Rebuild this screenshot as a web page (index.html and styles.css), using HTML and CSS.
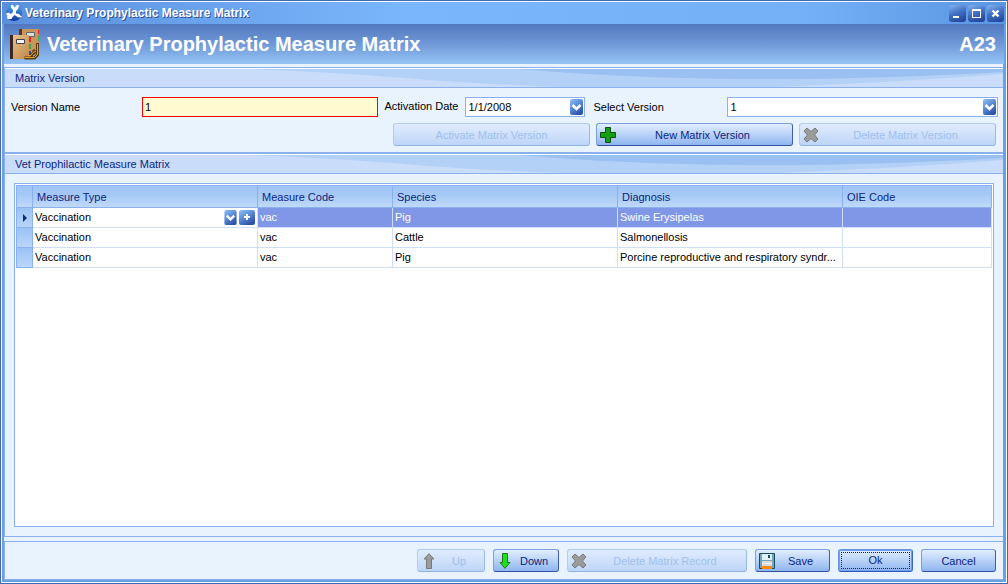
FILE: index.html
```html
<!DOCTYPE html>
<html lang="en">
<head>
<meta charset="utf-8">
<title>Veterinary Prophylactic Measure Matrix</title>
<link rel="stylesheet" href="styles.css">
</head>
<body>
<svg class="defs" aria-hidden="true">
  <defs>
    <linearGradient id="knob" x1="0" y1="0" x2="0.6" y2="1">
      <stop offset="0" stop-color="#8fc0f8"/><stop offset="0.45" stop-color="#5f93dc"/><stop offset="1" stop-color="#2d52a6"/>
    </linearGradient>
    <symbol id="chevron" viewBox="0 0 13 16">
      <rect width="13" height="16" rx="2" fill="url(#knob)"/>
      <path d="M2.500 6l4 4 4-4" fill="none" stroke="#fff" stroke-width="2.600"/>
    </symbol>
    <symbol id="cross" viewBox="0 0 16 16">
      <path d="M4 1l4 3.500L12 1l3 3-3.500 4 3.500 4-3 3-4-3.500L4 15l-3-3 3.500-4L1 4z" fill="#9b9b9b" stroke="#777" stroke-linejoin="round"/>
    </symbol>
    <symbol id="sweep" viewBox="0 0 1000 18" preserveAspectRatio="none">
      <rect width="1000" height="18" fill="#b3d0f7"/>
      <path d="M0 0H245Q330 3 400 9T560 18H0z" fill="#c9dcfa"/>
      <path d="M515 0Q620 9 740 10T1000 3V0z" fill="#9abff1"/>
      <path d="M770 18Q880 14 1000 5V18z" fill="#c9dcfa"/>
    </symbol>
  </defs>
</svg>
<div class="window">
  <header class="titlebar">
    <svg class="app-icon" viewBox="0 0 16 16" aria-hidden="true">
      <defs><linearGradient id="orb" x1="0" y1="0" x2="0" y2="1"><stop offset="0" stop-color="#4da3ea"/><stop offset="1" stop-color="#12379a"/></linearGradient></defs>
      <circle cx="8" cy="8" r="8" fill="url(#orb)"/>
      <path d="M5 0h2l1.500 2.500L11 0h2l-1 4-2 2v2.500l3 .5 3 3-3.500.5L8.500 10l-2 2-1 2H1.500L1 11l3-2 2.500-1L7 5 5 2.500z" fill="#fff"/>
      <path d="M0 8.500l3-1 1.500 1.500L1 11z" fill="#fff"/>
    </svg>
    <span class="caption">Veterinary Prophylactic Measure Matrix</span>
    <button class="sys" aria-label="Minimize"><svg viewBox="0 0 17 17"><path d="M4 11h6v2H4z" fill="#fff"/></svg></button>
    <button class="sys" aria-label="Maximize"><svg viewBox="0 0 17 17"><path d="M4 4h9v9H4zM5 6v6h7V6z" fill="#fff" fill-rule="evenodd"/></svg></button>
    <button class="sys" aria-label="Close"><svg viewBox="0 0 17 17"><path d="M5.500 5.500l6 6m0-6l-6 6" stroke="#fff" stroke-width="2.400"/></svg></button>
  </header>
  <div class="banner">
    <svg class="banner-icon" viewBox="0 0 32 32" aria-hidden="true">
      <defs><linearGradient id="tan" x1="0" y1="0" x2="1" y2="1"><stop offset="0" stop-color="#eac795"/><stop offset="1" stop-color="#bf8748"/></linearGradient></defs>
      <path d="M11 1h20v26H11z" fill="#c4965c"/><path d="M11 1h3v6h-3z" fill="#5e371c"/>
      <path d="M30 2h1v4h-1zM21 9h2v5h-2z" fill="#e22b26"/><path d="M30 8h1v5h-1zM21 16h2v5h-2z" fill="#38a94c"/><path d="M21 23h2v4h-2z" fill="#31509b"/>
      <path d="M18.500 4.500h8v4h-8z" fill="#ddd" stroke="#666"/>
      <path d="M2 7h19v24H2z" fill="url(#tan)"/><path d="M2 7h3v24H2z" fill="#3f2620"/>
      <path d="M8.500 11.500h8v4h-8z" fill="#eef4fa" stroke="#444"/>
      <path d="M29.500 15v12l-3 3h-10M25 22l2 2-4 3 1 2" fill="none" stroke="#5e3a0c" stroke-width="3"/>
      <path d="M29.500 16v10.500l-3 3H17M28 23l-3 1.500-2 3h-3" fill="none" stroke="#e0a62c"/>
    </svg>
    <h1>Veterinary Prophylactic Measure Matrix</h1>
    <span class="code">A23</span>
  </div>
  <form class="content">
    <section class="panel">
      <h2 class="panel-head"><svg class="sweep" aria-hidden="true"><use href="#sweep"/></svg><span>Matrix Version</span></h2>
      <div class="panel-body">
        <div class="fields">
          <label for="name">Version Name</label>
          <input id="name" class="box required" type="text" value="1">
          <label class="raised" for="date">Activation Date</label>
          <span class="combo">
            <input id="date" class="box" type="text" value="1/1/2008">
            <button type="button" class="drop" aria-label="Open calendar"><svg class="knob"><use href="#chevron"/></svg></button>
          </span>
          <label class="inset" for="version">Select Version</label>
          <span class="combo">
            <select id="version" class="box"><option>1</option></select>
            <svg class="knob" aria-hidden="true"><use href="#chevron"/></svg>
          </span>
        </div>
        <div class="actions">
          <button type="button" class="btn wide" disabled><span>Activate Matrix Version</span></button>
          <button type="button" class="btn wide">
            <svg class="icon" viewBox="0 0 16 16"><path d="M5.500.5h5v5h5v5h-5v5h-5v-5h-5v-5h5z" fill="#12a012" stroke="#104c10"/></svg>
            <span>New Matrix Version</span></button>
          <button type="button" class="btn wide" disabled>
            <svg class="icon"><use href="#cross"/></svg>
            <span>Delete Matrix Version</span></button>
        </div>
      </div>
    </section>
    <section class="panel grow">
      <h2 class="panel-head"><svg class="sweep" aria-hidden="true"><use href="#sweep"/></svg><span>Vet Prophilactic Measure Matrix</span></h2>
      <div class="grid-area">
        <div class="grid">
          <table>
            <colgroup><col class="c-mark"><col class="c-wide"><col class="c-code"><col class="c-wide"><col class="c-wide"><col></colgroup>
            <thead>
              <tr><th></th><th scope="col">Measure Type</th><th scope="col">Measure Code</th><th scope="col">Species</th><th scope="col">Diagnosis</th><th scope="col">OIE Code</th></tr>
            </thead>
            <tbody>
              <tr class="selected">
                <td class="mark"><svg viewBox="0 0 4 8" class="arrow"><path d="M0 0l4 4-4 4z" fill="#0c2a80"/></svg></td>
                <td class="editing">
                  <div class="editor">
                    <span class="combo">
                      <select aria-label="Measure Type"><option>Vaccination</option></select>
                      <svg class="knob" aria-hidden="true"><use href="#chevron"/></svg>
                    </span>
                    <button type="button" class="add" aria-label="Add measure type"><svg viewBox="0 0 16 15"><rect width="16" height="15" rx="2" fill="url(#knob)"/><path d="M8 4v6M5 7h6" stroke="#fff" stroke-width="2"/></svg></button>
                  </div>
                </td>
                <td>vac</td><td>Pig</td><td>Swine Erysipelas</td><td></td>
              </tr>
              <tr><td class="mark"></td><td>Vaccination</td><td>vac</td><td>Cattle</td><td>Salmonellosis</td><td></td></tr>
              <tr><td class="mark"></td><td>Vaccination</td><td>vac</td><td>Pig</td><td>Porcine reproductive and respiratory syndr...</td><td></td></tr>
            </tbody>
          </table>
        </div>
      </div>
    </section>
    <footer class="footer">
      <button type="button" class="btn w-up" disabled>
        <svg class="icon" viewBox="0 0 16 16"><path d="M8 .7l5 5.300h-2.500v9.500h-5V6H3z" fill="#9b9b9b" stroke="#777"/></svg>
        <span>Up</span></button>
      <button type="button" class="btn w-down">
        <svg class="icon" viewBox="0 0 16 16"><path d="M8 15.300L3 9.500h2.500v-9h5v9H13z" fill="#1fe01f" stroke="#157a15"/></svg>
        <span>Down</span></button>
      <button type="button" class="btn w-delete" disabled>
        <svg class="icon"><use href="#cross"/></svg>
        <span>Delete Matrix Record</span></button>
      <button type="submit" class="btn w-std">
        <svg class="icon" viewBox="0 0 16 16"><path d="M.5.500h15v15h-15z" fill="#6fa5bd" stroke="#1d4a60"/><path d="M3 1h10v6H3z" fill="#dff1f5"/><path d="M9 2h2v3H9z" fill="#1d4a60"/><path d="M3 8h10v5H3z" fill="#d8d8d8"/><path d="M3 10h10v1H3z" fill="#f2f2f2"/><path d="M3 13h10v3H3z" fill="#ff8a10"/></svg>
        <span>Save</span></button>
      <button type="button" class="btn w-std default"><span>Ok</span></button>
      <button type="button" class="btn w-std"><span>Cancel</span></button>
    </footer>
  </form>
</div>
</body>
</html>
```
FILE: styles.css
```css
* { box-sizing: border-box; }

body {
  margin: 0;
  font: 11px/14px "Liberation Sans", Arial, sans-serif;
  color: #000;
}

button, input, select { font: inherit; color: inherit; margin: 0; }
button { padding: 0; border: 0; background: none; }
svg { display: block; }
.defs { position: absolute; width: 0; height: 0; }

.window {
  display: flex;
  flex-direction: column;
  min-height: 100vh;
  padding: 1px;
  border: 1px solid #4868b4;
  background: #fff;
}

/* Title bar and banner */
.titlebar {
  display: flex;
  align-items: center;
  gap: 2px;
  height: 22px;
  padding: 0 2px 0 4px;
  background: linear-gradient(90deg, #5a8fdc, #7ab6fb 40%, #74b0f6 80%, #5a96e2);
}
.app-icon { width: 16px; height: 16px; }
.caption {
  flex: 1;
  padding-left: 1px;
  color: #fff;
  font-size: 12px;
  font-weight: bold;
  text-shadow: 1px 1px 0 #2c4f9a;
}
.sys {
  width: 17px;
  height: 17px;
  border-radius: 3px;
  background: linear-gradient(160deg, #86b4f0, #4272c4 45%, #1c3f94);
}
.banner {
  display: flex;
  align-items: center;
  gap: 7px;
  height: 40px;
  padding: 0 8px 0 4px;
  border: solid #6ca0e4;
  border-width: 0 2px;
  color: #fff;
  background: linear-gradient(#5277bd, #7099d8 50%, #94c4f5);
}
.banner-icon { width: 32px; height: 32px; }
.banner h1, .code { margin: 0; font-size: 20px; line-height: 24px; font-weight: bold; }
.banner h1 { flex: 1; }

/* Panels */
.content {
  display: flex;
  flex-direction: column;
  flex: 1;
  padding-top: 3px;
  border: solid #6ca0e4;
  border-width: 0 3px 2px 2px;
  background: #e8f3fe;
}
.panel {
  display: flex;
  flex-direction: column;
  border: solid #8ab0ee;
  border-width: 1px 0 1px 1px;
}
.grow { flex: 1; }
.panel-head {
  display: grid;
  align-items: center;
  height: 20px;
  margin: 0;
  border-top: 1px solid #fff;
  border-bottom: 1px solid #8ab0ee;
  font-size: 11px;
  font-weight: normal;
  color: #0c1f80;
}
.panel-head > * { grid-area: 1 / 1; }
.panel-head span { padding-left: 10px; }
.sweep { width: 100%; height: 18px; }
.panel-body { padding: 9px 5px 6px 6px; }

.fields {
  display: grid;
  grid-template-columns: 125px 236fr 75px 120px 130px 270fr;
  column-gap: 6px;
  align-items: center;
}
.raised { padding-bottom: 2px; }
.inset { padding-left: 2px; }
.box {
  width: 100%;
  height: 20px;
  padding: 0 2px;
  border: 1px solid #8ab0ee;
  border-radius: 0;
  background: #fff;
}
select { appearance: none; outline: 0; }
.required { border-color: #f00; background: #fffad0; }
.combo { display: grid; align-items: center; }
.combo > * { grid-area: 1 / 1; }
.combo > .knob, .drop { justify-self: end; margin-right: 2px; }
.drop .knob { margin: 0; }
.knob { width: 13px; height: 16px; pointer-events: none; }

/* Buttons */
.actions {
  display: flex;
  justify-content: flex-end;
  gap: 6px;
  padding: 6px 2px 0 0;
}
.btn {
  display: flex;
  align-items: center;
  height: 23px;
  padding: 0 3px;
  border: 1px solid;
  border-color: #7f9fe0 #3f5cb0 #3450a4 #7f9fe0;
  border-radius: 3px;
  color: #0c1f80;
  background: linear-gradient(#e2eefe, #b8d2f8 50%, #8fb6f0);
}
.btn span { flex: 1; text-align: center; }
.btn:disabled {
  border-color: #b2cbf3 #9bb9e8 #93b2e4 #b2cbf3;
  color: #a0bfee;
  background: linear-gradient(#dfecfe, #cfe1fb 50%, #bdd5f8);
}
.icon { width: 16px; height: 16px; }
.wide { width: 197px; }
.w-up { width: 68px; }
.w-down { width: 66px; }
.w-delete { width: 180px; }
.w-std { width: 75px; }
.default {
  padding: 2px;
  border-color: #6a94e0 #3a68c4 #2f5cba #6a94e0;
  box-shadow: inset 0 0 0 1px #6f9fe8;
}
.default span { border: 1px dotted #0c1f80; line-height: 15px; }

/* Grid */
.grid-area { display: flex; flex: 1; padding: 9px; }
.grid {
  flex: 1;
  padding: 1px;
  border: 1px solid #8ab0ee;
  background: #fff;
}
table {
  width: 100%;
  table-layout: fixed;
  border-spacing: 0;
  border-left: 1px solid #8ab0ee;
}
.c-mark { width: 16px; }
.c-wide { width: 225px; }
.c-code { width: 135px; }
th, td { padding: 0 3px; text-align: left; }
th {
  height: 23px;
  padding-left: 4px;
  border: solid #8ab0ee;
  border-width: 1px 1px 1px 0;
  font-weight: normal;
  color: #0c1f80;
  background: linear-gradient(#a0c4f5, #a4c9f6 40%, #c0d9f9);
}
td {
  height: 20px;
  padding: 0 2px 2px;
  border: solid #d0dff8;
  border-width: 0 1px 1px 0;
  overflow: hidden;
  white-space: nowrap;
  text-overflow: ellipsis;
}
.mark {
  padding: 0 0 0 6px;
  border-color: #8ab0ee;
  background: linear-gradient(#9cc3f4, #bad5f8);
}
.arrow { width: 4px; height: 8px; }
.selected td:not(.mark) { color: #fff; background: #7f97e6; }
.selected .editing:not(.mark) { padding: 0 2px 1px; color: #000; background: #fff; }
.editor { display: flex; align-items: center; gap: 2px; }
.editor .combo { flex: 1; }
.editor select { width: 100%; height: 15px; padding: 0; border: 0; background: none; }
.editor .knob { margin: 0; height: 15px; }
.add { width: 16px; height: 15px; }

.footer {
  display: flex;
  justify-content: flex-end;
  gap: 8px;
  margin-top: 4px;
  padding: 7px 7px 7px 0;
  border: 1px solid #8ab0ee;
  border-right: 0;
}
```
